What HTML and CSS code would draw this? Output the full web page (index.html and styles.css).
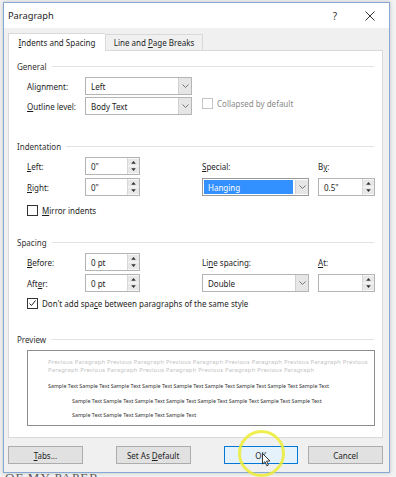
FILE: index.html
```html
<!DOCTYPE html>
<html lang="en">
<head>
    <meta charset="UTF-8">
    <meta name="viewport" content="width=device-width, initial-scale=1.0">
    <title>Paragraph</title>
    <link rel="stylesheet" href="styles.css">
</head>
<body>
    <div class="window">
        <!-- Title bar -->
        <div class="titlebar">
            <span class="title">Paragraph</span>
            <span class="help">?</span>
            <svg class="close" width="10" height="10" viewBox="0 0 10 10"><path d="M0.5 0.5 L9.5 9.5 M9.5 0.5 L0.5 9.5" stroke="#333" stroke-width="1" fill="none"/></svg>
        </div>

        <div class="client">
            <div class="tabs">
                <div class="tab active"><span><u>I</u>ndents and Spacing</span></div>
                <div class="tab"><span>Line and <u>P</u>age Breaks</span></div>
            </div>

            <div class="panel">
                <!-- General -->
                <div class="legend legend-first"><span>General</span></div>
                <div class="general">
                    <span class="label">Ali<u>g</u>nment:</span>
                    <div class="select">
                        <span class="value">Left</span>
                        <span class="arrow"><svg width="7" height="4" viewBox="0 0 7 4"><path d="M0.5 0.5 L3.5 3.5 L6.5 0.5" stroke="#777" fill="none"/></svg></span>
                    </div>
                    <span></span>
                    <span></span>
                    <span class="label"><u>O</u>utline level:</span>
                    <div class="select">
                        <span class="value">Body Text</span>
                        <span class="arrow"><svg width="7" height="4" viewBox="0 0 7 4"><path d="M0.5 0.5 L3.5 3.5 L6.5 0.5" stroke="#777" fill="none"/></svg></span>
                    </div>
                    <span></span>
                    <div class="check disabled"><span class="box"></span><span>Collapsed by default</span></div>
                </div>

                <!-- Indentation -->
                <div class="legend legend-indent"><span>Indentation</span></div>
                <div class="fields">
                    <span class="label"><u>L</u>eft:</span>
                    <div class="spin"><span class="value">0"</span><span class="spinner"><svg width="12" height="16" viewBox="0 0 12 16"><rect x="0" y="0" width="12" height="16" fill="#e8e8e8"/><line x1="0" y1="8" x2="12" y2="8" stroke="#fff"/><path d="M3.5 5.5 L6 2.5 L8.5 5.5 Z M3.5 10.5 L6 13.5 L8.5 10.5 Z" fill="#333"/></svg></span></div>
                    <span></span>
                    <span class="label"><u>S</u>pecial:</span>
                    <span></span>
                    <span class="label">B<u>y</u>:</span>

                    <span class="label"><u>R</u>ight:</span>
                    <div class="spin"><span class="value">0"</span><span class="spinner"><svg width="12" height="16" viewBox="0 0 12 16"><rect x="0" y="0" width="12" height="16" fill="#e8e8e8"/><line x1="0" y1="8" x2="12" y2="8" stroke="#fff"/><path d="M3.5 5.5 L6 2.5 L8.5 5.5 Z M3.5 10.5 L6 13.5 L8.5 10.5 Z" fill="#333"/></svg></span></div>
                    <span></span>
                    <div class="select focused">
                        <span class="value selected">Hanging</span>
                        <span class="arrow"><svg width="7" height="4" viewBox="0 0 7 4"><path d="M0.5 0.5 L3.5 3.5 L6.5 0.5" stroke="#777" fill="none"/></svg></span>
                    </div>
                    <span></span>
                    <div class="spin"><span class="value">0.5"</span><span class="spinner"><svg width="12" height="16" viewBox="0 0 12 16"><rect x="0" y="0" width="12" height="16" fill="#e8e8e8"/><line x1="0" y1="8" x2="12" y2="8" stroke="#fff"/><path d="M3.5 5.5 L6 2.5 L8.5 5.5 Z M3.5 10.5 L6 13.5 L8.5 10.5 Z" fill="#333"/></svg></span></div>
                </div>
                <div class="check check-mirror"><span class="box"></span><span><u>M</u>irror indents</span></div>

                <!-- Spacing -->
                <div class="legend legend-spacing"><span>Spacing</span></div>
                <div class="fields">
                    <span class="label"><u>B</u>efore:</span>
                    <div class="spin"><span class="value">0 pt</span><span class="spinner"><svg width="12" height="16" viewBox="0 0 12 16"><rect x="0" y="0" width="12" height="16" fill="#e8e8e8"/><line x1="0" y1="8" x2="12" y2="8" stroke="#fff"/><path d="M3.5 5.5 L6 2.5 L8.5 5.5 Z M3.5 10.5 L6 13.5 L8.5 10.5 Z" fill="#333"/></svg></span></div>
                    <span></span>
                    <span class="label"><span>Li<u>n</u>e spacing:</span></span>
                    <span></span>
                    <span class="label"><u>A</u>t:</span>

                    <span class="label">Aft<u>e</u>r:</span>
                    <div class="spin"><span class="value">0 pt</span><span class="spinner"><svg width="12" height="16" viewBox="0 0 12 16"><rect x="0" y="0" width="12" height="16" fill="#e8e8e8"/><line x1="0" y1="8" x2="12" y2="8" stroke="#fff"/><path d="M3.5 5.5 L6 2.5 L8.5 5.5 Z M3.5 10.5 L6 13.5 L8.5 10.5 Z" fill="#333"/></svg></span></div>
                    <span></span>
                    <div class="select">
                        <span class="value">Double</span>
                        <span class="arrow"><svg width="7" height="4" viewBox="0 0 7 4"><path d="M0.5 0.5 L3.5 3.5 L6.5 0.5" stroke="#777" fill="none"/></svg></span>
                    </div>
                    <span></span>
                    <div class="spin"><span class="value"></span><span class="spinner"><svg width="12" height="16" viewBox="0 0 12 16"><rect x="0" y="0" width="12" height="16" fill="#e8e8e8"/><line x1="0" y1="8" x2="12" y2="8" stroke="#fff"/><path d="M3.5 5.5 L6 2.5 L8.5 5.5 Z M3.5 10.5 L6 13.5 L8.5 10.5 Z" fill="#333"/></svg></span></div>
                </div>
                <div class="check check-space">
                    <span class="box"><svg width="9" height="9" viewBox="0 0 9 9"><path d="M1.5 4.5 L3.5 6.5 L7.5 1.5" stroke="#222" stroke-width="1" fill="none"/></svg></span>
                    <span>Don't add spa<u>c</u>e between paragraphs of the same style</span>
                </div>

                <!-- Preview -->
                <div class="legend legend-preview"><span>Preview</span></div>
                <div class="preview">
                    <div class="prev">Previous Paragraph Previous Paragraph Previous Paragraph Previous Paragraph Previous Paragraph Previous</div>
                    <div class="prev">Paragraph Previous Paragraph Previous Paragraph Previous Paragraph Previous Paragraph</div>
                    <div class="sample">Sample Text Sample Text Sample Text Sample Text Sample Text Sample Text Sample Text Sample Text Sample Text</div>
                    <div class="sample indent">Sample Text Sample Text Sample Text Sample Text Sample Text Sample Text Sample Text Sample Text</div>
                    <div class="sample indent">Sample Text Sample Text Sample Text Sample Text</div>
                </div>
            </div>

            <!-- Buttons -->
            <div class="buttons">
                <div class="btn"><span><u>T</u>abs...</span></div>
                <div class="btn btn-default"><span>Set As <u>D</u>efault</span></div>
                <div class="btn btn-ok"><span>OK</span></div>
                <div class="btn btn-cancel"><span>Cancel</span></div>
            </div>
        </div>
    </div>
    <div class="behind">OF MY PAPER</div>

    <!-- Click highlight and mouse pointer -->
    <div class="click-ring"></div>
    <svg class="pointer" width="9" height="14" viewBox="0 0 9 14"><path d="M0.5 0.5 L0.5 11 L3 8.6 L4.8 12.8 L6.4 12.1 L4.6 8 L8 8 Z" fill="#fff" stroke="#111" stroke-width="0.8"/></svg>
</body>
</html>
```

FILE: styles.css
```css
* {
    box-sizing: border-box;
}
body {
    margin: 0;
    width: 396px;
    height: 477px;
    overflow: hidden;
    position: relative;
    background-color: #f2f2f2;
    font-family: "Noto Sans", sans-serif;
    font-size: 8px;
    color: #1e1e1e;
}
u {
    text-underline-offset: 1px;
}
.window {
    width: 387px;
    margin: 2px 0 0 3px;
    border: 1px solid #86a8d4;
    background-color: #f0f0f0;
    box-shadow: 0 0 4px rgba(0, 0, 0, 0.2);
}
.titlebar {
    height: 25px;
    background-color: #fff;
    display: flex;
    align-items: center;
    padding: 0 14px 0 4px;
}
.title {
    flex: 1;
    font-size: 9.3px;
}
.help {
    font-size: 10px;
    color: #333;
    margin-right: 28px;
}
.client {
    padding: 5px 6px 8px 4px;
}
.tabs {
    display: flex;
    align-items: flex-end;
    height: 17px;
}
.tab {
    height: 16px;
    width: 98px;
    border: 1px solid #d9d9d9;
    border-bottom: none;
    background-color: #f0f0f0;
    display: flex;
    align-items: center;
    justify-content: center;
}
.tab.active {
    width: 97px;
    height: 18px;
    margin-bottom: -1px;
    background-color: #fff;
    position: relative;
    z-index: 1;
    border-right: none;
}
.panel {
    width: 375px;
    height: 388px;
    border: 1px solid #d9d9d9;
    background-color: #fff;
    padding: 0 8px;
}
.legend {
    display: flex;
    align-items: center;
    height: 12px;
    color: #333;
}
.legend::after {
    content: "";
    flex: 1;
    height: 1px;
    margin-left: 5px;
    background-color: #e3e3e3;
}
.legend-first {
    margin-top: 9px;
}
.legend-indent {
    margin-top: 25px;
}
.legend-spacing {
    margin-top: 20px;
}
.legend-preview {
    margin-top: 24px;
}
.general {
    display: grid;
    grid-template-columns: 58px 107px 10px auto;
    grid-auto-rows: 18px;
    row-gap: 2px;
    margin: 5px 0 0 10px;
}
.fields {
    display: grid;
    grid-template-columns: 58px 55px 62px 107px 9px 57px;
    grid-auto-rows: 18px;
    row-gap: 3px;
    margin: 5px 0 0 10px;
}
.label {
    display: flex;
    align-items: center;
}
.select,
.spin {
    display: flex;
    border: 1px solid #b4b4b4;
    background-color: #fff;
}
.value {
    flex: 1;
    display: flex;
    align-items: center;
    padding-left: 5px;
}
.arrow {
    width: 13px;
    display: flex;
    align-items: center;
    justify-content: center;
    background-color: #e6e6e6;
    border-left: 1px solid #d0d0d0;
}
.select.focused {
    border-color: #9a9a9a;
    padding: 1px 0 1px 1px;
}
.value.selected {
    background-color: #3390ff;
    color: #fff;
    padding-left: 4px;
    margin-right: 2px;
}
.spinner {
    width: 12px;
    display: flex;
    align-items: center;
    border-left: 1px solid #d8d8d8;
}
.check {
    display: flex;
    align-items: center;
    height: 12px;
}
.check .box {
    width: 11px;
    height: 11px;
    border: 1px solid #333;
    margin-right: 4px;
    display: flex;
    align-items: center;
    justify-content: center;
    background-color: #fff;
}
.check.disabled {
    color: #8a8a8a;
}
.check.disabled .box {
    border-color: #c4c4c4;
}
.check-mirror {
    margin: 8px 0 0 10px;
}
.check-space {
    margin: 5px 0 0 10px;
}
.preview {
    width: 348px;
    height: 76px;
    margin: 5px 0 0 10px;
    border: 1px solid #8c8c8c;
    padding: 7px 0 0 20px;
    font-size: 5.3px;
    white-space: nowrap;
}
.prev {
    height: 8px;
    line-height: 8px;
    font-size: 5.8px;
    letter-spacing: 0.22px;
    color: #c2c2c2;
}
.sample {
    height: 14.5px;
    line-height: 8px;
    color: #333;
}
.prev + .sample {
    margin-top: 8px;
}
.sample.indent {
    padding-left: 24px;
}
.buttons {
    display: flex;
    margin-top: 8px;
}
.btn {
    width: 75px;
    height: 18px;
    border: 1px solid #adadad;
    background-color: #e1e1e1;
    display: flex;
    align-items: center;
    justify-content: center;
}
.btn-default {
    margin-left: 33px;
}
.btn-ok {
    margin-left: 33px;
    border-color: #0078d7;
    background-color: #e5f1fb;
}
.btn-cancel {
    margin-left: 10px;
}
.behind {
    padding-left: 5px;
    font-family: "Liberation Serif", serif;
    font-size: 13px;
    line-height: 10px;
    letter-spacing: 1px;
    color: #5a5a5a;
}
.click-ring {
    position: absolute;
    left: 238px;
    top: 430px;
    width: 47px;
    height: 47px;
    border: 3px solid rgba(236, 236, 50, 0.85);
    border-radius: 50%;
}
.pointer {
    position: absolute;
    left: 262px;
    top: 453px;
}
```
